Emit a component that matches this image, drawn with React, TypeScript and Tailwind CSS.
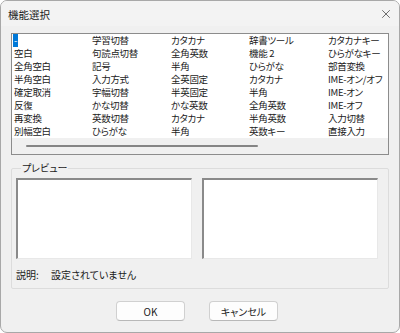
import { X } from 'lucide-react';

const columns: string[][] = [
  ['-', '空白', '全角空白', '半角空白', '確定取消', '反復', '再変換', '別幅空白'],
  ['学習切替', '句読点切替', '記号', '入力方式', '字幅切替', 'かな切替', '英数切替', 'ひらがな'],
  ['カタカナ', '全角英数', '半角', '全英固定', '半英固定', 'かな英数', 'カタカナ', '半角'],
  ['辞書ツール', '機能 2', 'ひらがな', 'カタカナ', '半角', '全角英数', '半角英数', '英数キー'],
  ['カタカナキー', 'ひらがなキー', '部首変換', 'IME-オン/オフ', 'IME-オン', 'IME-オフ', '入力切替', '直接入力'],
];

const font = "font-['Noto_Sans_CJK_JP','Noto_Sans',sans-serif] [font-feature-settings:'palt']";

export default function App() {
  return (
    <div
      className={`w-[400px] h-[333px] bg-[#f0f0f0] border border-[#a8a8a8] rounded-[7px] overflow-hidden text-[10px] leading-[13px] text-[#1b1b1b] ${font}`}
    >
      {/* title bar */}
      <div className="h-[25px] flex items-center justify-between pl-[7px] pr-[6px] bg-[#f3f3f3]">
        <span className="text-[10.5px] mt-[1px]">機能選択</span>
        <X className="w-[14px] h-[14px] text-[#333]" strokeWidth={1.2} />
      </div>

      <div className="pl-[10px] pt-[7px]">
        {/* list box */}
        <div className="w-[378px] h-[122px] border border-[#8c8c8c] bg-white flex flex-col">
          <div className="grid grid-cols-[78px_79px_78px_79px_1fr] pl-[1px] flex-1 text-[9.5px]">
            {columns.map((col, ci) => (
              <div key={ci} className="flex flex-col">
                {col.map((item, ri) => (
                  <div key={ri} className="h-[13px] flex items-center whitespace-nowrap">
                    {ci === 0 && ri === 0 ? (
                      <span className="bg-[#0078d7] text-white px-[1px] h-[13px] flex items-center">
                        -
                      </span>
                    ) : (
                      <span className="pl-[1px] tracking-[-0.3px]">{item}</span>
                    )}
                  </div>
                ))}
              </div>
            ))}
          </div>
          <div className="h-[16px] bg-[#f0f0f0] flex items-center pl-[14px]">
            <div className="w-[232px] h-[2px] bg-[#858585] rounded-full" />
          </div>
        </div>

        {/* group box */}
        <fieldset className="mt-[7px] w-[378px] h-[127px] border border-[#dcdcdc] rounded-[2px] pl-[4px] pr-[10px]">
          <legend className="ml-[5px] px-[1px] text-[10px] leading-[12px]">プレビュー</legend>
          <div className="flex gap-[10px] mt-[4px]">
            <div className="w-[176px] h-[81px] bg-white border-t-2 border-l-2 border-t-[#8a8a8a] border-l-[#8a8a8a] border-r border-b border-r-[#e8e8e8] border-b-[#e8e8e8]" />
            <div className="w-[176px] h-[81px] bg-white border-t-2 border-l-2 border-t-[#8a8a8a] border-l-[#8a8a8a] border-r border-b border-r-[#e8e8e8] border-b-[#e8e8e8]" />
          </div>
          <div className="flex mt-[9px]">
            <span className="w-[35px]">説明:</span>
            <span>設定されていません</span>
          </div>
        </fieldset>

        {/* buttons */}
        <div className="flex gap-[24px] pl-[105px] mt-[12px]">
          <button className="w-[69px] h-[20px] bg-[#fdfdfd] border border-[#d0d0d0] border-b-[#b8b8b8] rounded-[4px] text-[10px]">
            OK
          </button>
          <button className="w-[69px] h-[20px] bg-[#fdfdfd] border border-[#d0d0d0] border-b-[#b8b8b8] rounded-[4px] text-[10px]">
            キャンセル
          </button>
        </div>
      </div>
    </div>
  );
}
